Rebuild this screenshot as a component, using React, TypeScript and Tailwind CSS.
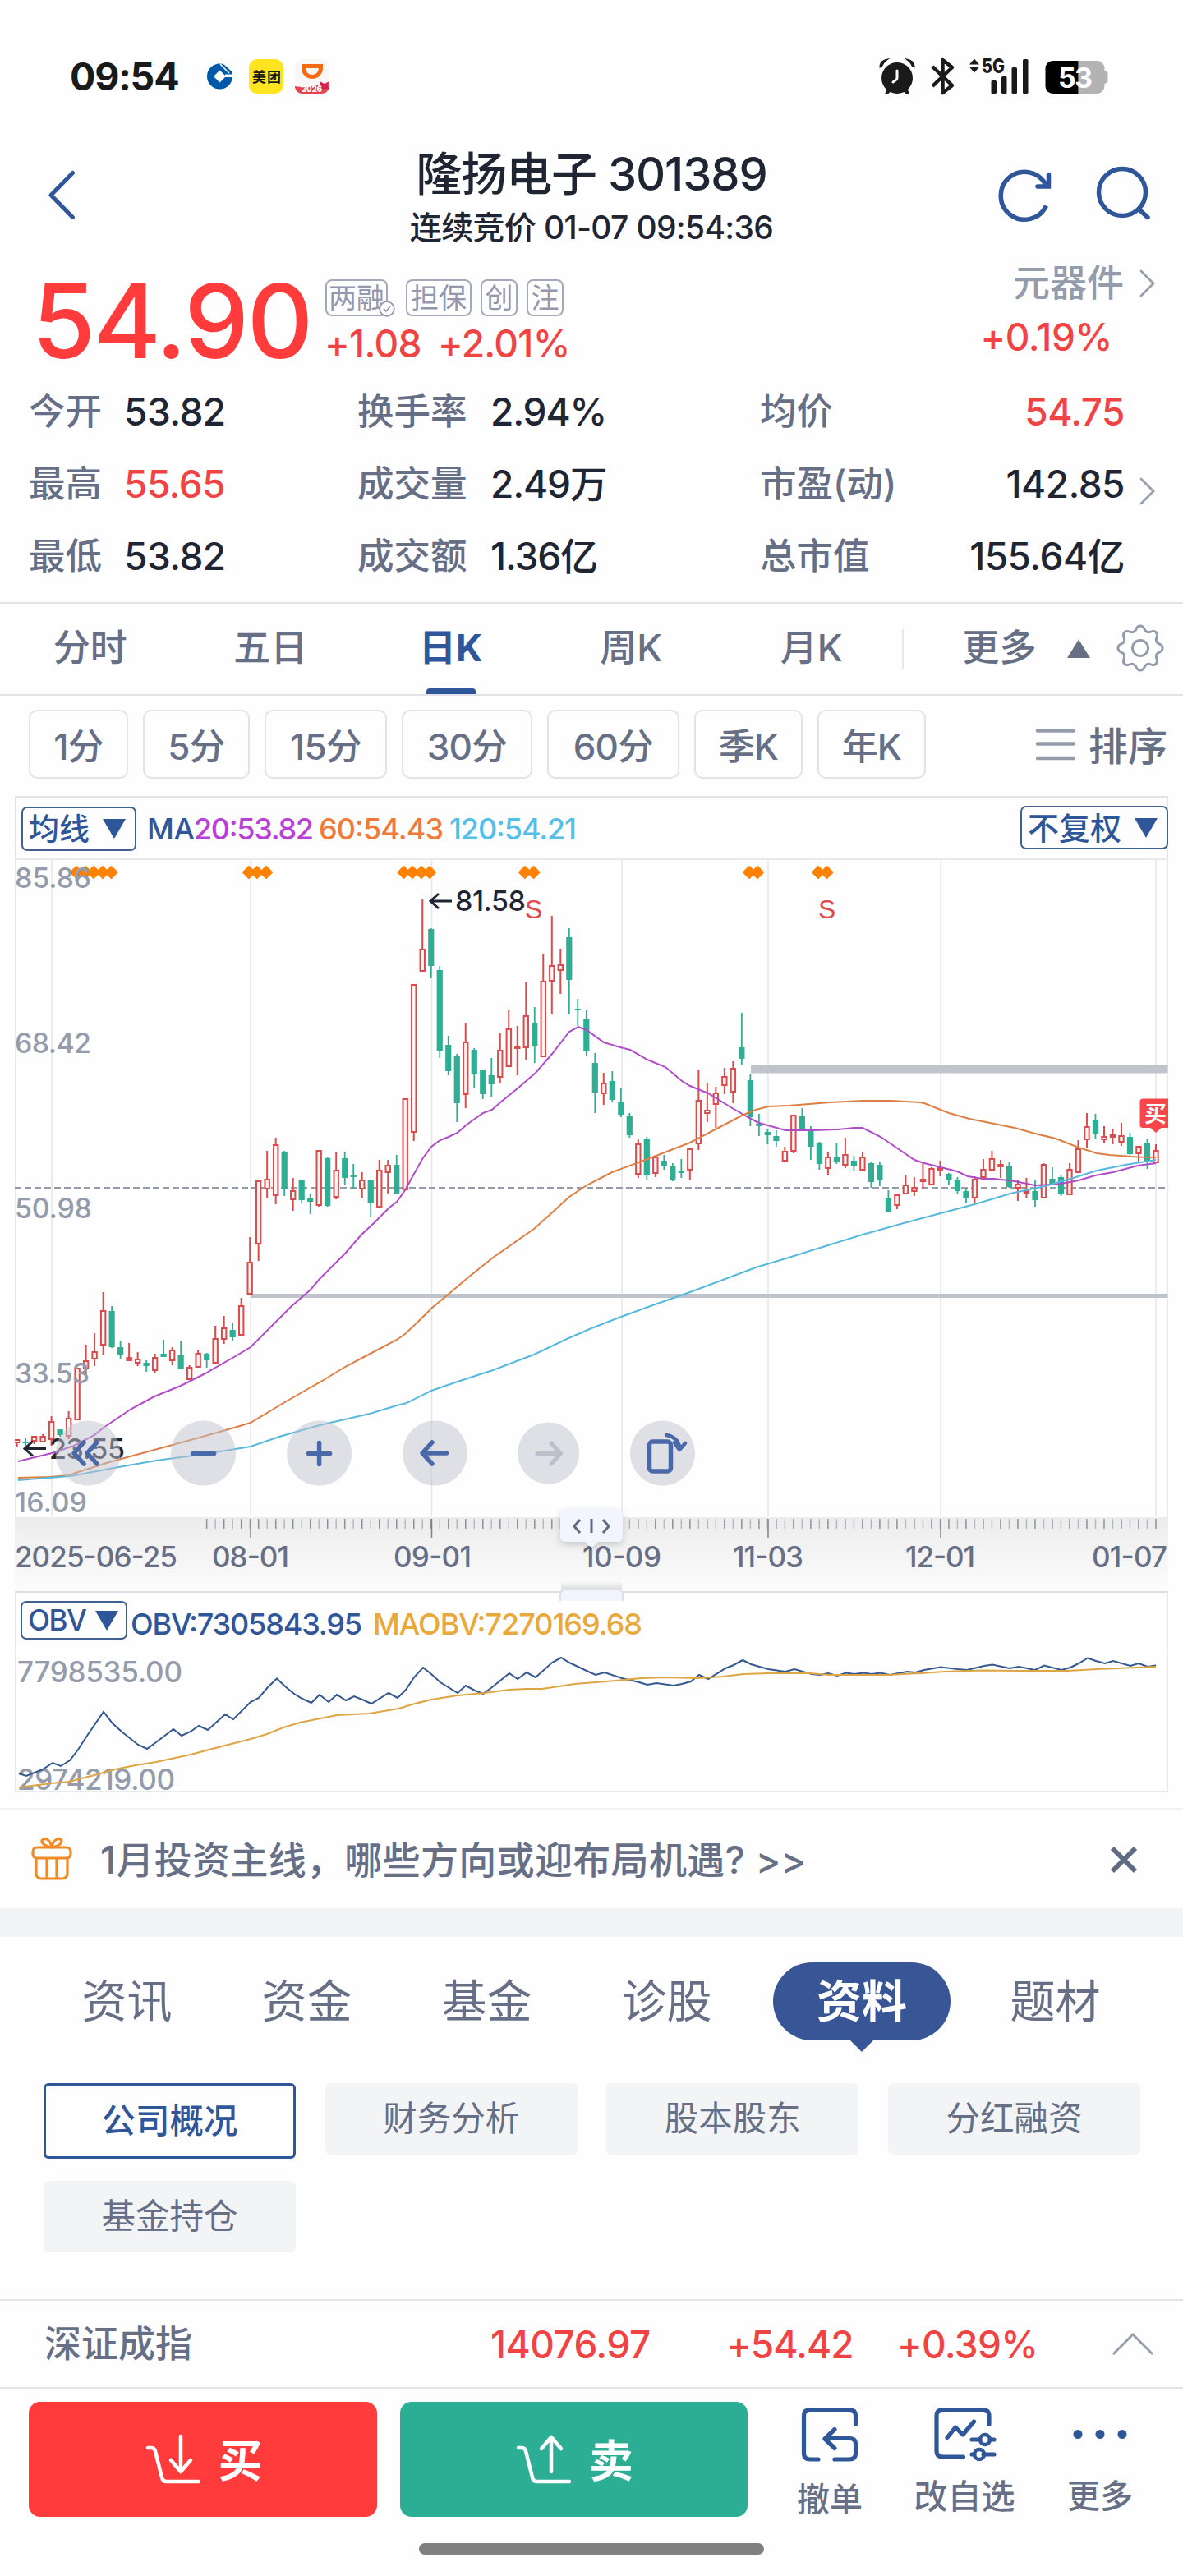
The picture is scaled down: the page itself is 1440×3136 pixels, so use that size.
import React from "react";
import clsx from "clsx";

type Point = [number, number];
// [high, bodyTop, bodyBottom, low, 1 = rise / 0 = fall]
type Candle = [number, number, number, number, 0 | 1];

const X0 = 20.6;
const STEP = 10.503;

const candles: Candle[] = [
  [1752, 1753, 1756, 1762, 1], [1751, 1755, 1757, 1760, 0], [1748, 1749, 1754, 1758, 1], [1746, 1749, 1755, 1756, 1],
  [1724, 1731, 1752, 1760, 1], [1740, 1740, 1747, 1749, 0], [1718, 1727, 1748, 1752, 1], [1665, 1666, 1728, 1728, 1],
  [1637, 1657, 1666, 1677, 1], [1623, 1646, 1654, 1663, 1], [1573, 1596, 1637, 1649, 1], [1590, 1596, 1640, 1641, 0],
  [1632, 1640, 1649, 1654, 0], [1635, 1653, 1656, 1657, 1], [1646, 1655, 1659, 1663, 1], [1656, 1659, 1663, 1670, 0],
  [1648, 1653, 1668, 1671, 1], [1631, 1648, 1652, 1652, 0], [1640, 1644, 1656, 1662, 1], [1633, 1649, 1667, 1667, 0],
  [1662, 1665, 1679, 1679, 1], [1643, 1648, 1664, 1665, 1], [1647, 1648, 1656, 1665, 0], [1614, 1630, 1659, 1661, 1],
  [1602, 1617, 1630, 1636, 1], [1610, 1619, 1628, 1632, 0], [1580, 1590, 1625, 1626, 1], [1506, 1537, 1575, 1575, 1],
  [1438, 1438, 1514, 1535, 1], [1401, 1436, 1447, 1458, 1], [1385, 1394, 1455, 1466, 1], [1401, 1402, 1447, 1456, 0],
  [1434, 1450, 1460, 1474, 1], [1436, 1437, 1461, 1465, 0], [1453, 1459, 1463, 1478, 0], [1400, 1401, 1467, 1469, 1],
  [1409, 1410, 1468, 1469, 0], [1402, 1425, 1457, 1460, 1], [1402, 1410, 1434, 1443, 0], [1417, 1431, 1433, 1447, 0],
  [1427, 1437, 1447, 1458, 1], [1436, 1437, 1464, 1481, 0], [1412, 1425, 1469, 1469, 1], [1412, 1419, 1427, 1453, 1],
  [1406, 1418, 1453, 1454, 0], [1337, 1338, 1448, 1449, 1], [1198, 1199, 1378, 1389, 1], [1095, 1156, 1182, 1183, 1],
  [1130, 1131, 1176, 1191, 0], [1176, 1181, 1280, 1288, 0], [1261, 1272, 1304, 1309, 0], [1283, 1286, 1343, 1366, 0],
  [1246, 1269, 1332, 1349, 1], [1276, 1278, 1308, 1325, 0], [1302, 1303, 1332, 1338, 0], [1288, 1309, 1320, 1335, 0],
  [1258, 1279, 1311, 1319, 1], [1230, 1253, 1298, 1299, 1], [1249, 1274, 1276, 1309, 1], [1196, 1237, 1275, 1290, 1],
  [1226, 1245, 1274, 1294, 0], [1161, 1195, 1286, 1286, 1], [1115, 1176, 1194, 1235, 1], [1155, 1175, 1181, 1210, 1],
  [1130, 1141, 1193, 1235, 0], [1216, 1228, 1229, 1249, 0], [1229, 1240, 1279, 1286, 0], [1282, 1294, 1330, 1355, 0],
  [1306, 1319, 1331, 1345, 1], [1304, 1316, 1339, 1342, 0], [1325, 1341, 1357, 1360, 0], [1355, 1359, 1382, 1385, 0],
  [1387, 1393, 1429, 1434, 1], [1384, 1386, 1431, 1436, 0], [1407, 1409, 1428, 1433, 1], [1406, 1413, 1420, 1424, 0],
  [1416, 1420, 1437, 1438, 0], [1411, 1426, 1428, 1434, 0], [1398, 1399, 1424, 1436, 1], [1302, 1340, 1392, 1400, 1],
  [1319, 1352, 1355, 1366, 1], [1323, 1331, 1344, 1373, 1], [1300, 1311, 1321, 1332, 1], [1292, 1301, 1329, 1343, 1],
  [1233, 1275, 1289, 1296, 0], [1307, 1315, 1360, 1371, 0], [1356, 1368, 1371, 1383, 0], [1375, 1378, 1382, 1393, 0],
  [1376, 1383, 1389, 1396, 0], [1396, 1402, 1413, 1415, 1], [1357, 1358, 1401, 1404, 1], [1349, 1358, 1374, 1377, 0],
  [1371, 1374, 1396, 1412, 0], [1390, 1392, 1417, 1424, 0], [1402, 1409, 1422, 1431, 1], [1392, 1409, 1415, 1417, 0],
  [1385, 1406, 1418, 1422, 1], [1407, 1413, 1419, 1426, 0], [1402, 1409, 1424, 1426, 1], [1414, 1416, 1439, 1446, 0],
  [1414, 1418, 1437, 1444, 0], [1449, 1458, 1476, 1476, 0], [1453, 1455, 1467, 1472, 1], [1431, 1443, 1453, 1454, 1],
  [1433, 1446, 1450, 1456, 1], [1416, 1436, 1438, 1448, 1], [1421, 1423, 1442, 1443, 1], [1413, 1422, 1424, 1432, 1],
  [1428, 1429, 1437, 1442, 0], [1433, 1437, 1450, 1454, 0], [1448, 1450, 1459, 1464, 0], [1432, 1436, 1458, 1465, 1],
  [1411, 1424, 1433, 1435, 1], [1401, 1411, 1424, 1425, 1], [1412, 1418, 1420, 1434, 1], [1415, 1419, 1445, 1446, 0],
  [1437, 1442, 1446, 1462, 1], [1434, 1450, 1452, 1459, 1], [1436, 1450, 1461, 1469, 0], [1416, 1418, 1458, 1459, 1],
  [1421, 1435, 1441, 1441, 0], [1430, 1433, 1454, 1456, 0], [1416, 1424, 1454, 1455, 1], [1388, 1399, 1427, 1428, 1],
  [1355, 1372, 1387, 1397, 1], [1356, 1364, 1380, 1387, 0], [1371, 1384, 1387, 1391, 1], [1374, 1382, 1384, 1393, 1],
  [1367, 1383, 1390, 1395, 1], [1379, 1384, 1405, 1406, 0], [1396, 1396, 1404, 1414, 1], [1386, 1392, 1415, 1423, 0],
  [1393, 1401, 1415, 1416, 1],
];

const ma20: Point[] = [
  [22, 1779], [63, 1769], [90, 1760], [115, 1747], [126, 1738], [160, 1715], [188, 1700], [220, 1687], [250, 1672],
  [285, 1652], [305, 1640], [325, 1620], [355, 1590], [378, 1570], [389, 1557], [420, 1526], [440, 1503], [455, 1489],
  [474, 1470], [483, 1463], [493, 1449], [504, 1429], [514, 1411], [525, 1396], [536, 1388], [546, 1384], [557, 1379],
  [567, 1370], [578, 1362], [588, 1355], [599, 1351], [609, 1342], [630, 1325], [652, 1306], [672, 1283], [693, 1256],
  [704, 1250], [714, 1254], [735, 1269], [755, 1275], [767, 1278], [788, 1290], [810, 1299], [830, 1316], [840, 1322],
  [862, 1331], [893, 1350], [914, 1362], [924, 1367], [956, 1376], [990, 1376], [1020, 1375], [1040, 1373], [1050, 1373],
  [1072, 1384], [1113, 1412], [1125, 1416], [1145, 1421], [1165, 1426], [1178, 1432], [1196, 1435], [1210, 1435],
  [1235, 1438], [1260, 1443], [1282, 1442], [1297, 1440], [1313, 1437], [1333, 1431], [1355, 1427], [1385, 1419], [1407, 1416],
];

const ma60: Point[] = [
  [22, 1799], [60, 1798], [84, 1796], [92, 1793], [133, 1780], [210, 1759], [250, 1748], [285, 1738], [305, 1732],
  [345, 1708], [378, 1689], [389, 1683], [420, 1664], [460, 1643], [483, 1631], [493, 1624], [510, 1608], [526, 1592],
  [550, 1572], [570, 1555], [600, 1531], [650, 1496], [670, 1478], [693, 1457], [714, 1443], [745, 1427], [783, 1413],
  [840, 1391], [903, 1358], [920, 1351], [935, 1347], [960, 1346], [1010, 1342], [1050, 1340], [1085, 1340], [1120, 1342],
  [1125, 1343], [1155, 1355], [1180, 1362], [1210, 1368], [1235, 1373], [1260, 1380], [1285, 1386], [1313, 1397],
  [1335, 1404], [1350, 1406], [1385, 1408.5], [1407, 1409],
];

const ma120: Point[] = [
  [22, 1802], [84, 1797], [92, 1796], [133, 1788], [190, 1778], [250, 1770], [305, 1761], [340, 1749], [389, 1735],
  [450, 1721], [483, 1711], [495, 1708], [525, 1693], [560, 1681], [600, 1668], [650, 1649], [690, 1630], [720, 1617],
  [756, 1603], [800, 1587], [840, 1573], [880, 1558], [920, 1543], [960, 1531], [995, 1520], [1050, 1503], [1100, 1489],
  [1145, 1477], [1190, 1465], [1230, 1453], [1267, 1445], [1300, 1436], [1335, 1425], [1370, 1418], [1407, 1412],
];

const obv: Point[] = [
  [23, 2159], [32, 2162], [52, 2154], [64, 2146], [74, 2150], [85, 2143], [95, 2130], [106, 2113], [126, 2084],
  [137, 2098], [148, 2108], [168, 2124], [179, 2129], [190, 2121], [211, 2105], [221, 2113], [232, 2108], [242, 2101],
  [253, 2106], [274, 2087], [284, 2093], [305, 2072], [315, 2067], [326, 2054], [337, 2043.5], [347, 2053], [358, 2062],
  [368, 2068], [379, 2073], [389, 2063], [400, 2072], [410, 2063], [421, 2070], [431, 2065], [441, 2069], [452, 2074],
  [473, 2061], [484, 2067], [494, 2057], [504, 2042], [515, 2030], [525, 2038], [536, 2048], [557, 2061], [567, 2052],
  [578, 2058], [588, 2062], [599, 2054], [620, 2037], [630, 2044], [641, 2036], [652, 2042], [672, 2024], [683, 2018],
  [693, 2024], [714, 2034], [725, 2039], [736, 2036], [757, 2043], [778, 2048], [788, 2051], [799, 2049], [820, 2052],
  [830, 2050], [841, 2047], [851, 2039], [862, 2044], [883, 2031], [893, 2027], [904, 2021], [914, 2026], [935, 2032],
  [956, 2035], [967, 2032], [988, 2038], [998, 2039], [1008, 2037], [1019, 2040], [1030, 2036.5], [1040, 2038],
  [1051, 2036.5], [1061, 2038], [1072, 2036.5], [1083, 2039], [1104, 2035], [1114, 2036], [1125, 2033], [1145, 2029.5],
  [1166, 2032], [1177, 2033], [1198, 2028], [1208, 2026.5], [1229, 2031], [1240, 2029], [1260, 2033], [1271, 2027.5],
  [1292, 2033], [1303, 2030], [1313, 2025], [1324, 2018.5], [1334, 2022], [1345, 2025], [1355, 2022], [1376, 2028],
  [1386, 2025], [1397, 2029], [1407, 2027.5],
];

const maobv: Point[] = [
  [23, 2176], [62, 2171], [85, 2169], [95, 2166], [115, 2161], [140, 2154], [165, 2149], [190, 2145], [232, 2136],
  [270, 2126], [305, 2117], [325, 2111], [345, 2103], [365, 2097], [390, 2092], [410, 2088], [430, 2087], [450, 2086],
  [485, 2080], [505, 2074], [525, 2069], [557, 2064], [590, 2061], [620, 2057], [640, 2056], [660, 2056], [680, 2053],
  [700, 2050], [725, 2048], [750, 2046], [780, 2043], [810, 2042], [850, 2043], [880, 2041], [905, 2038], [935, 2037],
  [985, 2037], [1010, 2039], [1080, 2039], [1120, 2037], [1150, 2035], [1195, 2033.5], [1240, 2034], [1300, 2034],
  [1335, 2032], [1360, 2031], [1407, 2029],
];

const gridX = [63, 305, 525.5, 757, 935, 1145, 1407];
const diamonds = [93, 104, 114, 125, 135.5, 303, 313, 324, 491.5, 502, 513, 523, 639, 649.5, 912, 922, 996, 1006.5];

// text, left, width of the glyph run, baseline
const priceLabels: [string, number, number][] = [
  ["85.86", 93, 1081],
  ["68.42", 93, 1282],
  ["50.98", 94, 1483],
  ["33.53", 91, 1684],
  ["16.09", 88, 1841],
];
const dateLabels: [string, number, number][] = [
  ["2025-06-25", 18, 198],
  ["08-01", 258, 94],
  ["09-01", 479, 95],
  ["10-09", 709, 96],
  ["11-03", 892, 86],
  ["12-01", 1102, 85],
  ["01-07", 1329, 92],
];

const toLine = (pts: Point[]) => pts.map((p) => p.join(",")).join(" ");

// eight soft teeth around the settings wheel
const gearPoints: Point[] = Array.from({ length: 96 }, (_, i) => {
  const a = (i / 96) * Math.PI * 2;
  const wave = Math.cos(8 * a);
  const r = 24.2 + 2.9 * Math.sign(wave) * Math.pow(Math.abs(wave), 0.7);
  return [+(1388 + r * Math.cos(a)).toFixed(2), +(789 + r * Math.sin(a)).toFixed(2)];
});

const StatusBar = () => (
  <div className="flex h-[140px] items-end pb-[22px]">
    <div className="ml-[85px] flex h-[50px] w-[137px] items-center text-[46.500px] leading-none font-bold tracking-[-0.025em] text-[#1a1a1a]">
      09:54
    </div>
    <svg className="ml-[30px] h-[50px] w-[150px] overflow-visible" viewBox="252 68 150 50">
      <circle cx="267.5" cy="93" r="15.5" fill="#0059a8" />
      <path d="M267.5 85.500l7.500 7.500-7.500 7.500-7.500-7.500z" fill="#fff" />
      <path d="M274 90.500h10v3.500h-10z" fill="#fefefe" />
      <path d="M268 78l11 11M272 77l11 10" stroke="#fefefe" strokeWidth="1.500" />
      <rect x="303" y="72" width="42" height="42" rx="10" fill="#ffe41f" />
      <text x="307" y="99.500" fontSize="17" fontWeight="700" fill="#1a1a1a" textLength="35">美团</text>
      <rect x="359" y="72" width="42" height="42" rx="9" fill="#faf6f5" />
      <path d="M359 105q10 2 21 0t21-4v4a9 9 0 0 1-9 9h-24a9 9 0 0 1-9-8z" fill="#e8424f" />
      <path d="M369.500 80.500h21v2.500a10.500 10.500 0 0 1-21 0z" fill="none" stroke="#f56a14" strokeWidth="5" />
      <path d="M389 99l6 3 6-3-3 5 3 4h-10z" fill="#d8204e" />
      <text x="367" y="112" fontSize="11" fontWeight="800" fill="#fff" textLength="25" lengthAdjust="spacingAndGlyphs">2026</text>
    </svg>
    <svg className="ml-auto h-[50px] w-[290px] overflow-visible" viewBox="1065 68 290 50">
      <g fill="#1a1a1a">
        <circle cx="1092" cy="95" r="19" />
        <path d="M1070.500 83q-1-11 13-12-7 4-9.500 10zM1113.500 83q1-11-13-12 7 4 9.500 10z" />
        <path d="M1079 109l-2 6h3l5-4zM1105 109l2 6h-3l-5-4z" />
      </g>
      <path d="M1092 86v9q0 2-5 5" fill="none" stroke="#fff" strokeWidth="3" strokeLinecap="round" strokeLinejoin="round" />
      <path d="M1135 81l24 23-11.500 9V73l11.500 9-24 23" fill="none" stroke="#1a1a1a" strokeWidth="4.500" strokeLinejoin="round" />
      <path d="M1180 78.500l6-7 6 7zM1180 81.500l6 7 6-7z" fill="#1a1a1a" />
      <text x="1195" y="89" fontSize="24" fontWeight="800" fill="#1a1a1a" textLength="28" lengthAdjust="spacingAndGlyphs">5G</text>
      <g fill="#1a1a1a">
        <rect x="1206.500" y="98" width="6.500" height="16" rx="1.500" />
        <rect x="1219" y="93" width="6.500" height="21" rx="1.500" />
        <rect x="1231.500" y="82" width="6.500" height="32" rx="1.500" />
        <rect x="1245" y="72" width="6.500" height="42" rx="1.500" />
      </g>
      <path d="M1312.500 74h23a9 9 0 0 1 9 9v3q4 1 4 4v8q0 3-4 4v3a9 9 0 0 1-9 9h-23z" fill="#b3b3b3" />
      <path d="M1312.500 74h-31a9 9 0 0 0-9 9v22a9 9 0 0 0 9 9h31z" fill="#000" />
      <text x="1288" y="106.500" fontSize="34" fontWeight="700" fill="#fff" textLength="42">53</text>
    </svg>
    <div className="w-[85px]" />
  </div>
);

const Header = () => (
  <div className="flex h-[180px] items-start">
    <svg className="mt-[60px] ml-[50px] h-[76px] w-[50px]" viewBox="50 200 50 76">
      <path d="M88.500 210.500L62 237.500l26.500 27" fill="none" stroke="#2f5699" strokeWidth="5" strokeLinecap="round" strokeLinejoin="round" />
    </svg>
    <div className="ml-[140px] flex flex-1 flex-col items-center text-[#1f2533]">
      <h1 className="mt-[44px] text-[56px] leading-none font-medium tracking-[-0.019em] whitespace-pre">隆扬电子 301389</h1>
      <p className="mt-[17px] text-[39px] leading-none font-medium tracking-[-0.017em] whitespace-pre">连续竞价 01-07 09:54:36</p>
    </div>
    <svg className="mt-[50px] mr-[30px] h-[90px] w-[210px]" viewBox="1200 190 210 90">
      <g fill="none" stroke="#2f5699" strokeWidth="5.500">
        <path d="M1273.500 250.500A29 29 0 1 1 1273 225" />
        <path d="M1263 227h13.500v-14.500" strokeLinecap="round" />
        <circle cx="1366" cy="234" r="28.500" />
        <path d="M1386 254.500l11 10" strokeLinecap="round" />
      </g>
    </svg>
  </div>
);

const Badge = ({ className, children }: { className: string; children: React.ReactNode }) => (
  <span className={clsx("flex h-[45px] items-center justify-center rounded-[8px] border-2 border-[#a5a8ba] text-[34px] leading-none font-normal text-[#9497ad]", className)}>
    {children}
  </span>
);

const RightChevron = () => (
  <svg className="h-[36px] w-[22px]" viewBox="0 0 22 36">
    <path d="M3 3l15 15L3 33" fill="none" stroke="#9a9fac" strokeWidth="2.800" strokeLinecap="round" />
  </svg>
);

const Quote = () => (
  <div className="flex h-[140px]">
    <div className="ml-[39px] flex w-[357px] items-center text-[125px] leading-none font-medium tracking-[-0.018em] text-[#ff3b3b]">54.90</div>
    <div className="flex flex-1 flex-col pt-[20px]">
      <div className="flex">
        <div className="relative">
          <Badge className="w-[76px]">两融</Badge>
          <svg className="absolute -right-[9px] -bottom-[1px] h-[20px] w-[20px]" viewBox="0 0 20 20">
            <circle cx="10" cy="10" r="8.800" fill="#fefefe" stroke="#9497ad" strokeWidth="1.800" />
            <path d="M6 10l3 3 5-6" fill="none" stroke="#9497ad" strokeWidth="1.800" />
          </svg>
        </div>
        <Badge className="ml-[22px] w-[80px]">担保</Badge>
        <Badge className="ml-[11px] w-[45px]">创</Badge>
        <Badge className="ml-[11px] w-[45px]">注</Badge>
      </div>
      <div className="mt-[10px] -ml-[1px] flex text-[46px] leading-none font-medium tracking-[-0.015em] text-[#f04444]">
        <span className="w-[138px]">+1.08</span>
        <span>+2.01%</span>
      </div>
    </div>
    <div className="flex w-[330px] flex-col items-end pr-[32px]">
      <div className="mt-[2px] flex items-center text-[#949cab]">
        <span className="mr-[18px] text-[45px] leading-none font-medium">元器件</span>
        <RightChevron />
      </div>
      <span className="mt-[20px] mr-[54px] text-[46px] leading-none font-medium tracking-[-0.008em] text-[#f04444]">+0.19%</span>
    </div>
  </div>
);

const stats = [
  [{ k: "今开", v: "53.82" }, { k: "换手率", v: "2.94%" }, { k: "均价", v: "54.75", red: true }],
  [{ k: "最高", v: "55.65", red: true }, { k: "成交量", v: "2.49万" }, { k: "市盈(动)", v: "142.85", more: true }],
  [{ k: "最低", v: "53.82" }, { k: "成交额", v: "1.36亿" }, { k: "总市值", v: "155.64亿" }],
];

const Stats = () => (
  <div className="flex h-[273px] flex-col text-[46px] leading-none font-medium">
    {stats.map((row, i) => (
      <div key={i} className="flex h-[88px] items-center pb-[6px]">
        {row.map((s, j) => (
          <div key={s.k} className={clsx("flex items-center", j === 0 && "ml-[35px] w-[400px]", j === 1 && "w-[490px]", j === 2 && "flex-1")}>
            <span className={clsx("text-[44.500px] text-[#666f85]", j === 0 && "w-[116px]", j === 1 && "w-[162px]")}>{s.k}</span>
            <span
              className={clsx(
                j === 1 ? "tracking-[-0.025em]" : "tracking-[-0.012em]",
                s.red ? "text-[#f04444]" : "text-[#1f2533]",
                j === 2 && "ml-auto"
              )}
            >
              {s.v}
            </span>
            {j === 2 && <span className="mt-[18px] flex w-[71px] justify-end pr-[32px]">{"more" in s && <RightChevron />}</span>}
          </div>
        ))}
      </div>
    ))}
  </div>
);

const PeriodTabs = () => (
  <div className="flex h-[114px] items-stretch border-t-2 border-b-2 border-[#e1e3e6] text-[45px] leading-none font-medium text-[#666f85]">
    {["分时", "五日", "日K", "周K", "月K"].map((t) => (
      <div
        key={t}
        className={clsx("relative flex w-[219.500px] items-center justify-center pb-[4px]", t === "日K" && "font-bold text-[#2f5699]")}
      >
        {t}
        {t === "日K" && <span className="absolute bottom-0 h-[7px] w-[60px] rounded-t-[4px] bg-[#2f5699]" />}
      </div>
    ))}
    <div className="mt-[31px] h-[48px] w-[2px] bg-[#e6e8eb]" />
    <div className="ml-[72px] flex items-center pb-[4px]">更多</div>
    <svg className="mt-[22px] ml-[26.500px] h-[64px] w-[140px]" viewBox="1288 757 140 64">
      <path d="M1299 801h28l-14-22.500z" fill="#666f85" />
      <g fill="none" stroke="#949cab" strokeWidth="3" strokeLinejoin="round">
        <circle cx="1388" cy="789" r="9.500" />
        <polygon points={toLine(gearPoints)} />
      </g>
    </svg>
  </div>
);

const MinuteChips = () => (
  <div className="flex h-[122px] items-start gap-[18px] pt-[17px] pl-[35px] text-[44px] leading-none font-medium text-[#666f85]">
    {[
      ["1分", "w-[121px]"],
      ["5分", "w-[130px]"],
      ["15分", "w-[149px]"],
      ["30分", "w-[159px]"],
      ["60分", "w-[161px]"],
      ["季K", "w-[132px]"],
      ["年K", "w-[132px]"],
    ].map(([t, w]) => (
      <div key={t} className={clsx("flex h-[84px] items-center justify-center rounded-[10px] border-2 border-[#e1e3e6] pt-[5px] tracking-[-0.02em]", w)}>
        {t}
      </div>
    ))}
    <svg className="mt-[20px] ml-[116px] h-[44px] w-[48px]" viewBox="0 0 48 44">
      <path d="M2 5.500h44M2 21.500h44M2 39h44" stroke="#949cab" strokeWidth="4.500" strokeLinecap="round" />
    </svg>
    <span className="-ml-[2px] mt-[21px] text-[48px]">排序</span>
  </div>
);

const DropButton = ({ className, children }: { className: string; children: React.ReactNode }) => (
  <div className={clsx("flex items-center justify-between rounded-[7px] border-2 border-[#41608f] pl-[7px] text-[#2f5699]", className)}>
    {children}
    <svg className="h-[24px] w-[28px]" viewBox="0 0 28 24">
      <path d="M0 0h28L14 24z" fill="#2f5699" />
    </svg>
  </div>
);

const MaBar = () => (
  <div className="mx-[18px] flex h-[77px] border-t-2 border-r-2 border-l-2 border-[#e1e3e6] leading-none font-medium">
    <DropButton className="mt-[11px] ml-[6px] h-[54px] w-[140px] pr-[11px] text-[37px]">均线</DropButton>
    <svg className="ml-[10px] h-[74px] w-[540px]" viewBox="176 971 540 74" fontSize="36" fontWeight="500">
      <text x="179" y="1022" fill="#2f5699" textLength="58">MA</text>
      <text x="236" y="1022" fill="#b93fd6" textLength="146">20:53.82</text>
      <text x="388" y="1022" fill="#f07b37" textLength="152">60:54.43</text>
      <text x="547" y="1022" fill="#54bfe8" textLength="155">120:54.21</text>
    </svg>
    <DropButton className="mt-[10px] -mr-[2px] ml-auto h-[53px] w-[180px] pr-[11px] text-[38px]">不复权</DropButton>
  </div>
);

const CandleShape = ({ c, i }: { c: Candle; i: number }) => {
  const [high, top, bottom, low, rise] = c;
  const x = X0 + STEP * i;
  if (rise) {
    return (
      <g stroke="#db4b4b" strokeWidth="2" fill="none">
        <path d={`M${x} ${high}V${top}M${x} ${bottom}V${low}`} />
        <rect x={x - 2.7} y={top} width="5.400" height={Math.max(bottom - top, 1)} fill="#fff5f4" />
      </g>
    );
  }
  return (
    <g fill="#2fae94">
      <rect x={x - 0.9} y={high} width="1.800" height={low - high} />
      <rect x={x - 3.6} y={top} width="7.200" height={Math.max(bottom - top, 1.5)} />
    </g>
  );
};

const ChartControls = () => (
  <g>
    {[107, 247.5, 388.6, 529.5, 667.6, 806.5].map((cx, i) => (
      <circle key={cx} cx={cx} cy="1769" r={i === 4 ? 37.5 : 39.5} fill="#bfc1cc" fillOpacity="0.500" />
    ))}
    <g fill="none" stroke="#4a69a8" strokeWidth="5.500" strokeLinecap="round" strokeLinejoin="round">
      <path d="M102 1756l-12 13 12 13M118 1756l-12 13 12 13" />
      <path d="M234.500 1769.500h26" />
      <path d="M375.500 1769.500h26M388.600 1756.500v26" />
      <path d="M543.500 1769h-28M526 1756l-12 13 12 13" />
      <rect x="790.500" y="1755" width="26" height="36" rx="4" />
      <path d="M811 1747q14 2 17 17M821 1756l6 9 7-8" strokeWidth="4.500" />
    </g>
    <path d="M654 1769.500h27M671 1757l11.500 12.500-11.500 12.500" fill="none" stroke="#bcc0cd" strokeWidth="5" strokeLinecap="round" strokeLinejoin="round" />
  </g>
);

const KChart = () => (
  <div className="relative z-10 h-[892px]">
    <svg className="h-[892px] w-[1440px] overflow-visible" viewBox="0 1046 1440 892" fontWeight="500">
      <defs>
        <linearGradient id="axis" x1="0" y1="0" x2="0" y2="1">
          <stop offset="0" stopColor="#ececec" />
          <stop offset="1" stopColor="#fcfcfc" />
        </linearGradient>
        <linearGradient id="lip" x1="0" y1="0" x2="0" y2="1">
          <stop offset="0" stopColor="#000" stopOpacity="0" />
          <stop offset="1" stopColor="#000" stopOpacity="0.130" />
        </linearGradient>
        <filter id="soft" x="-20%" y="-40%" width="140%" height="200%">
          <feDropShadow dx="0" dy="3" stdDeviation="4" floodColor="#000" floodOpacity="0.180" />
        </filter>
        <clipPath id="plot">
          <rect x="18" y="1046" width="1403.500" height="800" />
        </clipPath>
      </defs>

      <path d="M18 1046H1422M19 1046V1847M1421 1046V1847" stroke="#e8e9ec" strokeWidth="2" />
      {gridX.map((x) => (
        <path key={x} d={`M${x} 1047V1846`} stroke="#e4e6e9" strokeWidth="1.500" />
      ))}
      <path d="M18 1446H1421" stroke="#939ca9" strokeWidth="2" strokeDasharray="8 4" />
      <rect x="914" y="1296.500" width="507.500" height="10" fill="#bfc4cc" />
      <rect x="305" y="1575" width="1116.500" height="5" fill="#bfc4cc" />

      {diamonds.map((x) => (
        <path key={x} d={`M${x} 1055l7 7-7 7-7-7z`} fill="#ff8205" stroke="#ff8205" strokeWidth="2" strokeLinejoin="round" />
      ))}

      <g clipPath="url(#plot)">
        {candles.map((c, i) => (
          <CandleShape key={i} c={c} i={i} />
        ))}
      </g>

      <g fontSize="34" fill="#949cab">
        {priceLabels.map(([t, w, y]) => (
          <text key={t} x="18" y={y} textLength={w}>{t}</text>
        ))}
      </g>
      <g fill="#1f2533" fontSize="34">
        <path d="M550 1097h-26M534 1088l-10 9 10 9" fill="none" stroke="#1f2533" strokeWidth="3" />
        <text x="554" y="1109" textLength="86">81.58</text>
        <path d="M56 1763.500h-26M40 1754.500l-10 9 10 9" fill="none" stroke="#1f2533" strokeWidth="3" />
        <text x="60" y="1776" textLength="92">23.55</text>
      </g>
      <g fill="#e04a4a" fontSize="32" fontWeight="400" fontFamily="Liberation Sans">
        <text x="639" y="1117.500">S</text>
        <text x="996" y="1118">S</text>
      </g>

      <g fill="none" strokeWidth="2">
        <polyline points={toLine(ma20)} stroke="#b04cc8" />
        <polyline points={toLine(ma60)} stroke="#dd7f45" />
        <polyline points={toLine(ma120)} stroke="#57b8dc" />
      </g>

      <path d="M1391 1337.500h31v35.500h-8.500l-6.500 6-6.500-6h-9.500a3.500 3.500 0 0 1-3.500-3.500v-28.500a3.500 3.500 0 0 1 3.500-3.500z" fill="#f8464a" />
      <text x="1393" y="1366" fontSize="27" fontWeight="700" fill="#fff">买</text>

      <ChartControls />

      <rect x="18" y="1847" width="1404" height="91" fill="url(#axis)" />
      {candles.map((_, i) =>
        i >= 22 ? (
          <path key={i} d={`M${X0 + STEP * i} 1849V1861`} stroke={i % 2 ? "#b4b8c0" : "#8a909c"} strokeWidth="1.500" />
        ) : null
      )}
      {gridX.slice(1, 6).map((x) => (
        <path key={x} d={`M${x} 1849V1872`} stroke="#7b8290" strokeWidth="1.500" />
      ))}
      <g fontSize="35" fill="#666f85">
        {dateLabels.map(([t, x, w]) => (
          <text key={t} x={x} y="1908" textLength={w}>{t}</text>
        ))}
      </g>
      <path d="M18 1938H1422" stroke="#dcdee1" strokeWidth="2" />
      <path d="M688 1837h64a6 6 0 0 1 6 6v28a6 6 0 0 1-6 6h-24l-8 7-8-7h-24a6 6 0 0 1-6-6v-28a6 6 0 0 1 6-6z" fill="#f2f5fd" filter="url(#soft)" />
      <path d="M706 1850l-7 8 7 8M720 1849v17M734 1850l7 8-7 8" fill="none" stroke="#5f6b80" strokeWidth="3" />
      <rect x="683" y="1925" width="74" height="10" fill="url(#lip)" />
      <path d="M682 1949v-8a6 6 0 0 1 6-6h64a6 6 0 0 1 6 6v8z" fill="#f2f5fd" />
      <path d="M682 1949v-8a6 6 0 0 1 6-6h64a6 6 0 0 1 6 6v8" fill="none" stroke="#dcdfe6" strokeWidth="2" />
    </svg>
  </div>
);

const ObvPanel = () => (
  <div className="flex h-[263px] flex-col">
    <div className="mx-[18px] flex h-[70px] border-x-2 border-[#e8e9ec] leading-none font-medium">
      <DropButton className="mt-[11px] ml-[5px] h-[47px] w-[130px] pr-[9px] text-[35px] tracking-[-0.04em]">OBV</DropButton>
      <svg className="h-[70px] w-[660px]" viewBox="155 1938 660 70" fontSize="36" fontWeight="500">
        <text x="159" y="1990" fill="#2f5699" textLength="282">OBV:7305843.95</text>
        <text x="454" y="1990" fill="#e9a93a" textLength="328">MAOBV:7270169.68</text>
      </svg>
    </div>
    <svg className="h-[193px] w-[1440px]" viewBox="0 2008 1440 193" fontWeight="500">
      <path d="M19 2009V2181H1421V2009" fill="none" stroke="#e8e9ec" strokeWidth="2" />
      <g fontSize="35" fill="#949cab">
        <text x="21" y="2048" textLength="201">7798535.00</text>
        <text x="21" y="2179" textLength="192">2974219.00</text>
      </g>
      <polyline points={toLine(obv)} fill="none" stroke="#34588f" strokeWidth="2" />
      <polyline points={toLine(maobv)} fill="none" stroke="#dda544" strokeWidth="2.200" />
    </svg>
  </div>
);

const Banner = () => (
  <div className="flex h-[122px] items-center border-t-2 border-[#f0f1f3] font-medium">
    <svg className="ml-[38px] h-[54px] w-[50px]" viewBox="0 0 50 54">
      <g fill="none" stroke="#f08a24" strokeWidth="3.200" strokeLinejoin="round">
        <rect x="2" y="13" width="46" height="13" rx="5" />
        <path d="M6 26v19a6 6 0 0 0 6 6h26a6 6 0 0 0 6-6V26" />
        <path d="M19 27v24M31 27v24" />
        <path d="M25 13Q12 10 13 5q2-4 6-2 5 3 6 10 1-7 6-10 4-2 6 2 1 5-12 8z" />
      </g>
    </svg>
    <p className="mt-[2px] ml-[34px] text-[46px] leading-none tracking-[0.007em] whitespace-pre text-[#666f85]">1月投资主线，哪些方向或迎布局机遇? &gt;&gt;</p>
    <svg className="mt-[2px] mr-[54px] ml-auto h-[36px] w-[36px]" viewBox="0 0 36 36">
      <path d="M4 4l28 28M32 4L4 32" stroke="#5f6b82" strokeWidth="6" />
    </svg>
  </div>
);

const InfoTabs = () => (
  <div className="flex h-[161px] pt-[31px] text-[55px] leading-none text-[#666f85]">
    <div className="w-[45px]" />
    {["资讯", "资金", "基金", "诊股"].map((t) => (
      <div key={t} className="flex h-[95px] w-[219px] items-center justify-center">{t}</div>
    ))}
    <div className="relative ml-[20px] flex h-[95px] w-[216px] items-center justify-center rounded-full bg-[#385696] font-bold text-white">
      资料
      <svg className="absolute -bottom-[14px] h-[15px] w-[30px]" viewBox="0 0 30 15">
        <path d="M0 0h30L15 15z" fill="#385696" />
      </svg>
    </div>
    <div className="ml-[18px] flex h-[95px] w-[219px] items-center justify-center">题材</div>
  </div>
);

const SubTabs = () => (
  <div className="grid h-[280px] grid-cols-4 content-start gap-x-[35.500px] gap-y-[27px] pt-[17px] pr-[52px] pl-[53px] text-[41.500px] leading-none text-[#666f85]">
    {["公司概况", "财务分析", "股本股东", "分红融资", "基金持仓"].map((t, i) => (
      <div
        key={t}
        className={clsx(
          "flex items-center justify-center rounded-[6px]",
          i === 0 ? "h-[92px] border-[3px] border-[#2f5699] pt-[2px] font-medium text-[#2f5699]" : "h-[87px] bg-[#f3f4f6]"
        )}
      >
        {t}
      </div>
    ))}
  </div>
);

const IndexBar = () => (
  <div className="flex h-[107px] items-center border-t-2 border-[#e1e3e6] text-[46px] leading-none font-medium text-[#f04444]">
    <span className="ml-[54px] w-[543px] text-[45px] text-[#666f85]">深证成指</span>
    <span className="w-[287px] tracking-[-0.012em]">14076.97</span>
    <span className="w-[208px] tracking-[-0.02em]">+54.42</span>
    <span className="tracking-[-0.015em]">+0.39%</span>
    <svg className="mr-[34px] ml-auto h-[30px] w-[54px]" viewBox="0 0 54 30">
      <path d="M3 27L27 3l24 24" fill="none" stroke="#949cab" strokeWidth="2.800" />
    </svg>
  </div>
);

const TradeButton = ({ sell }: { sell?: boolean }) => (
  <div className={clsx("flex h-[140px] items-center justify-center gap-[19px] rounded-[14px] pl-[2px] text-[54px] leading-none font-bold text-white", sell ? "w-[423px] bg-[#2bae94]" : "w-[424px] bg-[#ff3b3b]")}>
    <svg className="h-[62px] w-[70px]" viewBox="0 0 70 62">
      <g fill="none" stroke="#fff" strokeWidth="4.500" strokeLinecap="round" strokeLinejoin="round">
        <path d="M3 17h4q4 0 5 4l8 32q1 5 6 5h39" />
        {sell ? <path d="M43 46V4M31 18L43 4l12 14" /> : <path d="M43 3v42M31 32l12 14 12-14" />}
      </g>
    </svg>
    <span className="mt-[5px]">{sell ? "卖" : "买"}</span>
  </div>
);

const BottomBar = () => (
  <div className="flex h-[190px] border-t-2 border-[#e1e3e6] pt-[16px]">
    <div className="ml-[35px] flex gap-[28px]">
      <TradeButton />
      <TradeButton sell />
    </div>
    <div className="flex text-[40px] leading-none font-medium text-[#666f85]">
      <div className="ml-[51px] flex w-[98px] flex-col items-center">
        <svg className="mt-[5px] h-[70px] w-[72px]" viewBox="974 2929 72 70">
          <path
            d="M1041.500 2951v-10q0-7.500-7.500-7.500h-48q-7.500 0-7.500 7.500v46q0 7 7.500 7h10M1016 2994h18q7.500 0 7.500-7v-12q0-6.500-7.500-6.500h-29M1016 2957.500l-12 11.500 12 11.500"
            fill="none"
            stroke="#2f5699"
            strokeWidth="5.200"
            strokeLinecap="round"
            strokeLinejoin="round"
          />
        </svg>
        <span className="mt-[24px]">撤单</span>
      </div>
      <div className="ml-[52px] flex w-[126px] flex-col items-center">
        <svg className="mt-[5px] h-[70px] w-[78px]" viewBox="1136 2929 78 70">
          <g fill="none" stroke="#2f5699" strokeWidth="5.200" strokeLinecap="round" strokeLinejoin="round">
            <path d="M1205 2951v-10q0-7.500-7.500-7.500h-49q-7.500 0-7.500 7.500v43q0 7 7.500 7h25" />
            <path d="M1154 2967.500l10-12.500 9 9 13.500-16" />
            <path d="M1184 2970h10M1206 2970h5M1184 2988h3M1198 2988h13" />
            <circle cx="1200" cy="2970" r="6" strokeWidth="4.500" />
            <circle cx="1193" cy="2988" r="6" strokeWidth="4.500" />
          </g>
        </svg>
        <span className="mt-[20px] text-[41px]">改自选</span>
      </div>
      <div className="ml-[57px] flex w-[90px] flex-col items-center">
        <svg className="mt-[5px] h-[70px] w-[78px]" viewBox="1300 2929 78 70">
          <g fill="#2f5699">
            <circle cx="1312" cy="2963.500" r="5.500" />
            <circle cx="1339" cy="2963.500" r="5.500" />
            <circle cx="1366" cy="2963.500" r="5.500" />
          </g>
        </svg>
        <span className="mt-[20px]">更多</span>
      </div>
    </div>
  </div>
);

export default function App() {
  return (
    <div className="h-[3136px] w-[1440px] overflow-hidden bg-[#fefefe] font-['Inter','Noto_Sans_CJK_SC',sans-serif]">
      <StatusBar />
      <Header />
      <Quote />
      <Stats />
      <PeriodTabs />
      <MinuteChips />
      <MaBar />
      <KChart />
      <ObvPanel />
      <Banner />
      <div className="h-[35px] bg-[#f2f4f6]" />
      <InfoTabs />
      <SubTabs />
      <IndexBar />
      <BottomBar />
      <div className="mx-auto h-[14px] w-[420px] rounded-full bg-[#808080]" />
    </div>
  );
}
